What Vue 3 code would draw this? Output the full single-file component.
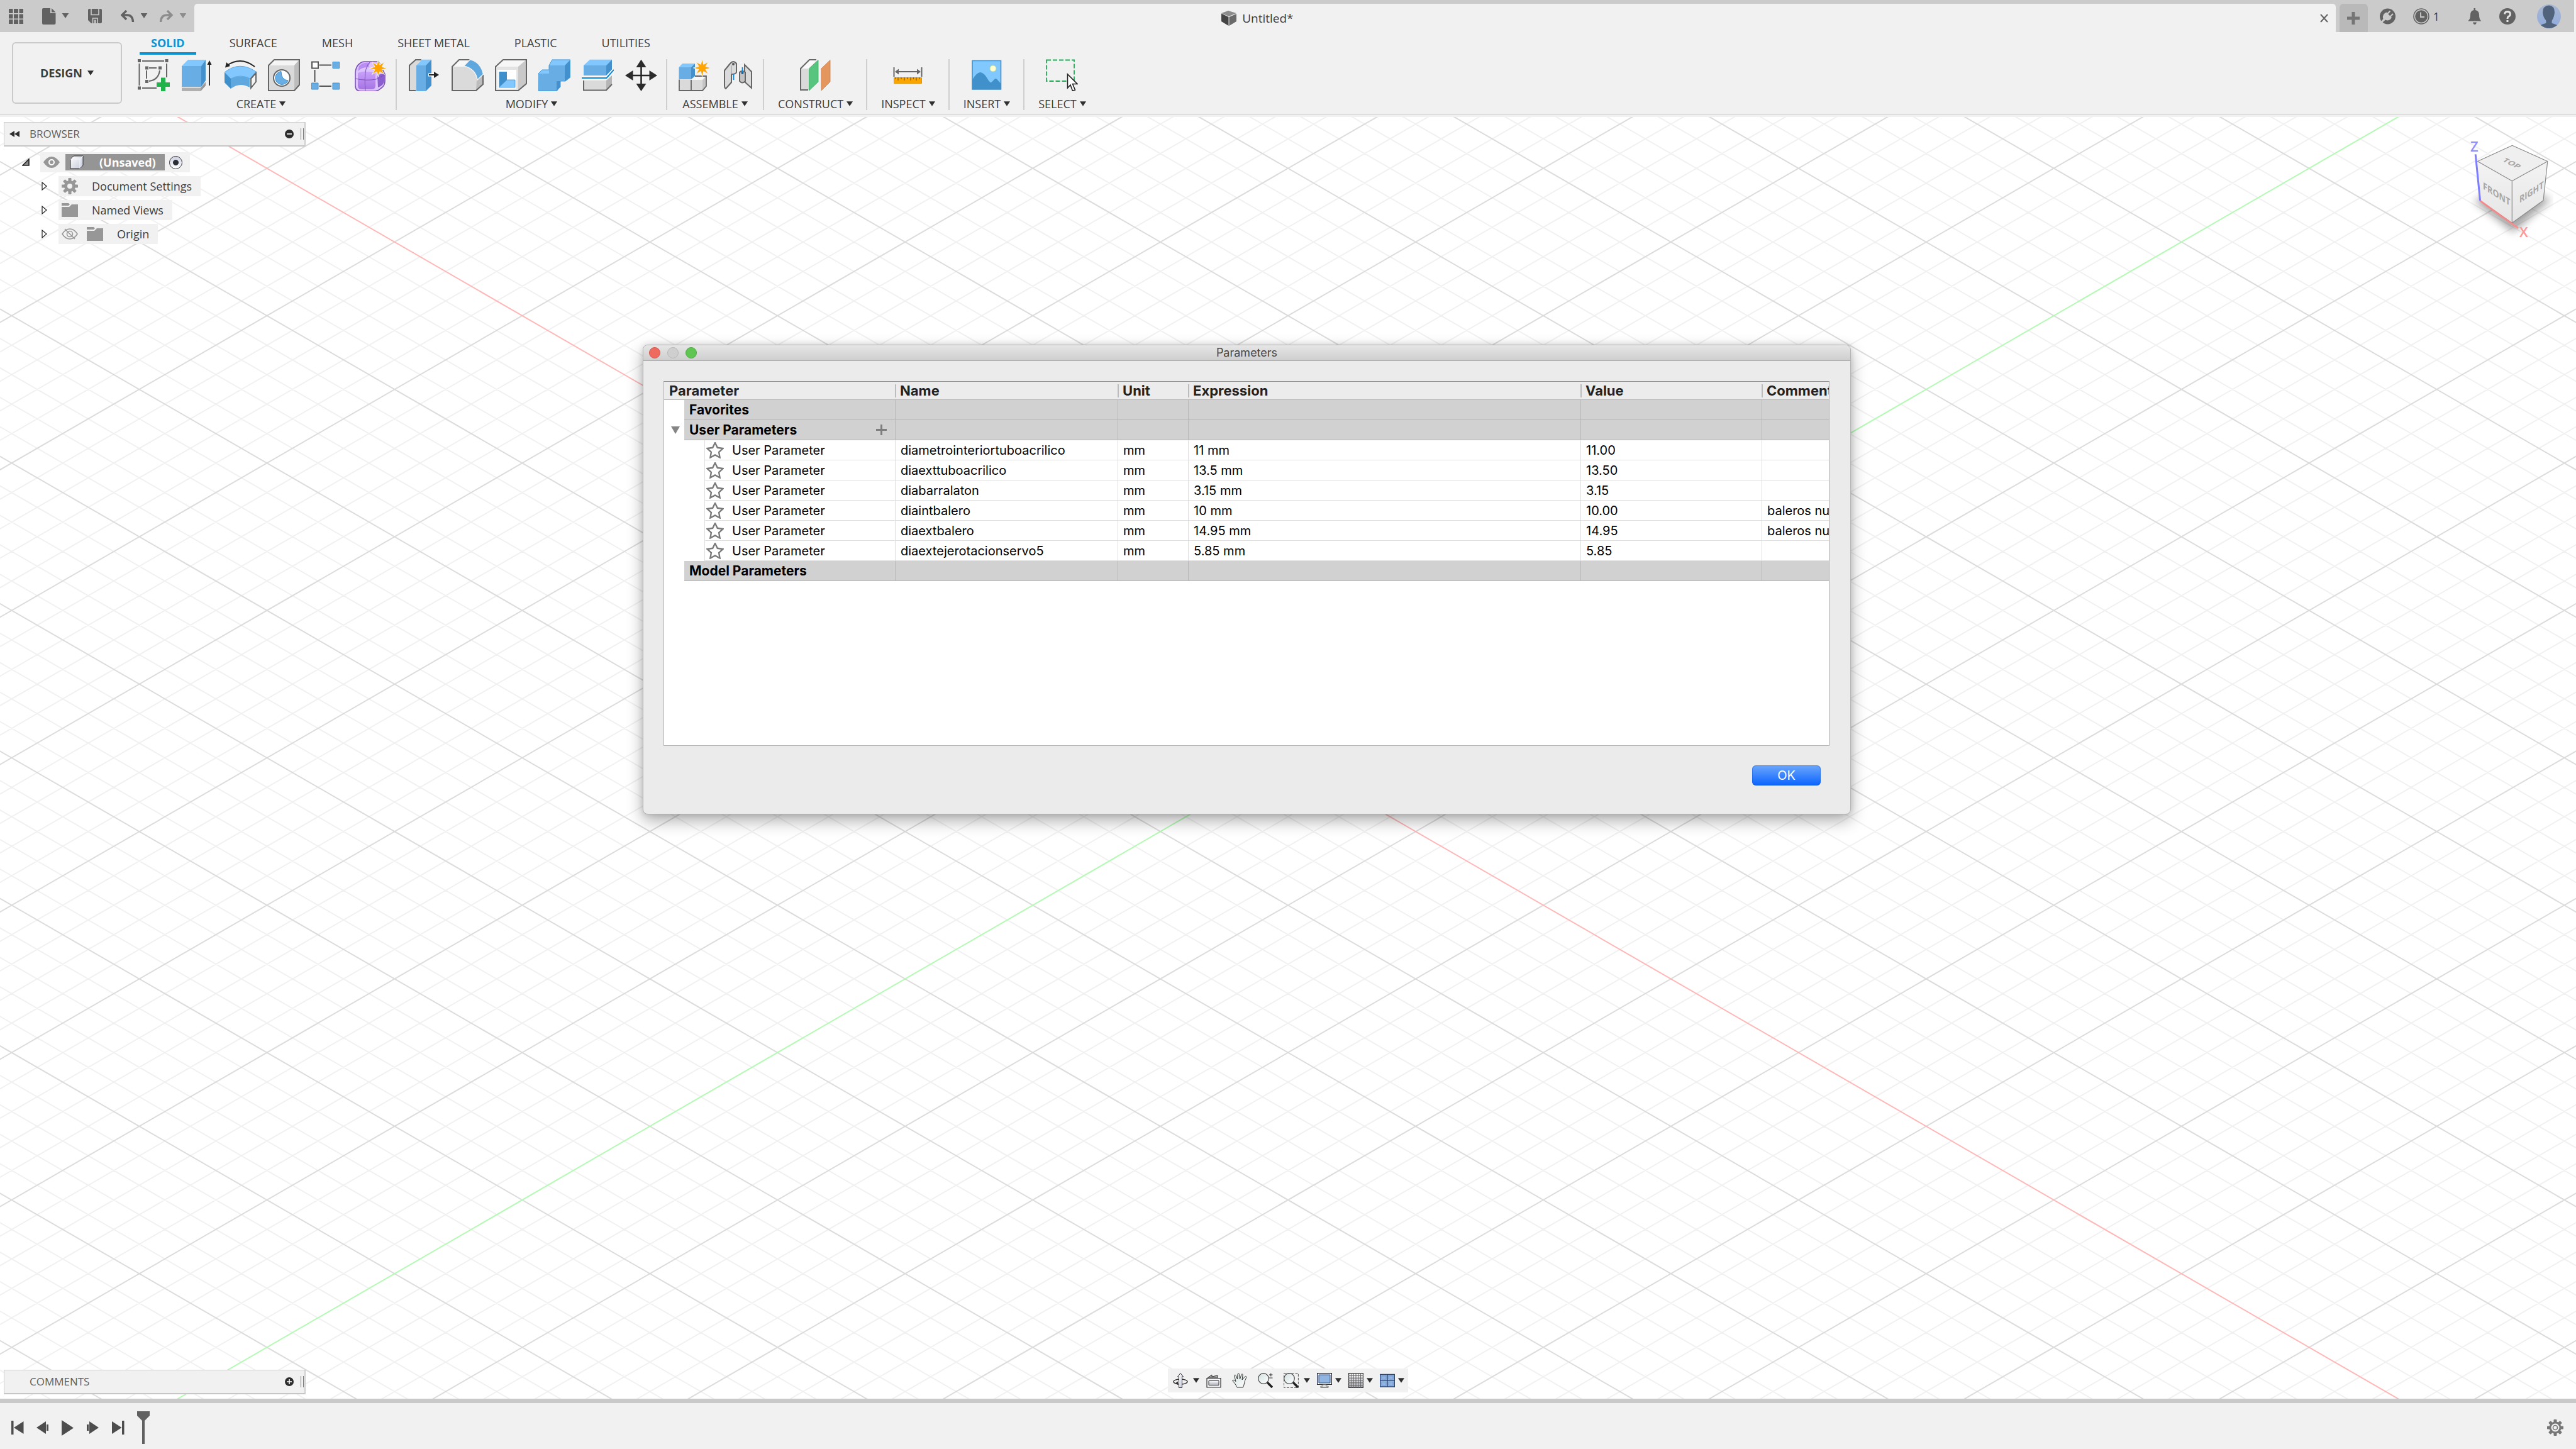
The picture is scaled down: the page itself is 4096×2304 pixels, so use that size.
<script setup>
import { ref } from 'vue'

const tabs = ['SOLID', 'SURFACE', 'MESH', 'SHEET METAL', 'PLASTIC', 'UTILITIES']
const activeTab = ref('SOLID')

const groups = [
  { label: 'CREATE', icons: ['sketch', 'extrude', 'revolve', 'hole', 'pattern', 'form'] },
  { label: 'MODIFY', icons: ['presspull', 'fillet', 'shell', 'combine', 'split', 'move'] },
  { label: 'ASSEMBLE', icons: ['component', 'joint'] },
  { label: 'CONSTRUCT', icons: ['plane'] },
  { label: 'INSPECT', icons: ['measure'] },
  { label: 'INSERT', icons: ['picture'] },
  { label: 'SELECT', icons: ['select'] },
]

const parameters = [
  { name: 'diametrointeriortuboacrilico', expression: '11 mm', value: '11.00', comment: '' },
  { name: 'diaexttuboacrilico', expression: '13.5 mm', value: '13.50', comment: '' },
  { name: 'diabarralaton', expression: '3.15 mm', value: '3.15', comment: '' },
  { name: 'diaintbalero', expression: '10 mm', value: '10.00', comment: 'baleros nu' },
  { name: 'diaextbalero', expression: '14.95 mm', value: '14.95', comment: 'baleros nu' },
  { name: 'diaextejerotacionservo5', expression: '5.85 mm', value: '5.85', comment: '' },
]

const navTools = [
  { icon: 'orbit', label: 'Orbit', menu: true },
  { icon: 'lookat', label: 'Look at' },
  { icon: 'pan', label: 'Pan' },
  { icon: 'zoom', label: 'Zoom' },
  { icon: 'fit', label: 'Fit', menu: true },
  { icon: 'display', label: 'Display settings', menu: true },
  { icon: 'gridsnap', label: 'Grid and snaps', menu: true },
  { icon: 'viewports', label: 'Viewports', menu: true },
]

const transport = ['first', 'prev', 'play', 'next', 'last']

// Isometric ground grid: parallel families of lines, every fifth one is major.
const slope = Math.tan(Math.PI / 6)
const step = 46.868
const reach = 2600
const family = (sign, major) => {
  let d = ''
  for (let k = -52; k <= 52; k++) {
    if (k === 0 || (k % 5 === 0) !== major) continue
    const c = k * step
    d += `M${-reach} ${(c - sign * slope * reach).toFixed(1)}L${reach} ${(c + sign * slope * reach).toFixed(1)}`
  }
  return d
}
const minorLines = family(1, false) + family(-1, false)
const majorLines = family(1, true) + family(-1, true)
const axisY = slope * reach

const star = (cx, cy, outer, inner, n) =>
  Array.from({ length: n * 2 }, (_, i) => {
    const r = i % 2 ? inner : outer
    const a = (Math.PI * i) / n - Math.PI / 2
    return `${(cx + r * Math.cos(a)).toFixed(1)},${(cy + r * Math.sin(a)).toFixed(1)}`
  }).join(' ')
const teeth = Array.from({ length: 8 }, (_, i) => i * 45)
</script>

<template>
  <div class="app">
    <svg class="sprite" aria-hidden="true">
      <defs>
        <linearGradient id="purple" x1="0" y1="0" x2="0" y2="1">
          <stop offset="0" stop-color="#c9a2fb" /><stop offset="1" stop-color="#a674e4" />
        </linearGradient>
        <linearGradient id="glass" x1="0" y1="0" x2="1" y2="1">
          <stop offset="0" stop-color="#d3e0e0" /><stop offset="1" stop-color="#ffffff" />
        </linearGradient>
        <linearGradient id="steel" x1="0" y1="0" x2="0" y2="1">
          <stop offset="0" stop-color="#ffffff" /><stop offset="1" stop-color="#a9abb8" />
        </linearGradient>
        <linearGradient id="body" x1="0" y1="0" x2="1" y2="1">
          <stop offset="0" stop-color="#ffffff" /><stop offset="1" stop-color="#c3c7da" />
        </linearGradient>
        <linearGradient id="avatar" x1="0" y1="0" x2="0" y2="1">
          <stop offset="0" stop-color="#a9b8d3" /><stop offset="1" stop-color="#8fabdc" />
        </linearGradient>
      </defs>

      <symbol id="i-sketch" viewBox="0 0 51 51">
        <path d="M7 3H42M2.500 7V42M46 7V29M7 46H30M18 14H30M14 18V31M35 18Q33 33 18 35" fill="none" stroke="#666" stroke-width="2" />
        <path d="M0 0h5v5h-5zM43.500 0h5v5h-5zM0 43.500h5v5h-5zM12 11.500h5v5h-5zM33 11.500h5v5h-5zM12 33h5v5h-5z" fill="#666" />
        <path d="M37 29.500h7v7.500h7v7h-7v7.500h-7v-7.500h-7v-7h7z" fill="#22b24c" />
      </symbol>
      <symbol id="i-extrude" viewBox="0 0 51 51">
        <path d="M1 11H32V44H1z" fill="#68aee4" />
        <path d="M1 11L11 1H39L32 11z" fill="#82c7fd" />
        <path d="M39 1V34L32 44V11z" fill="#4390cd" />
        <path d="M1 45.500H31L39 36V42L31 51H1z" fill="#b0b0b0" />
        <path d="M31 46L39 37V42L31 51z" fill="#999" />
        <path d="M45 8V42" stroke="#222" stroke-width="1.800" />
        <path d="M45 2L48.500 9H41.500z" fill="#222" />
      </symbol>
      <symbol id="i-revolve" viewBox="0 0 51 51">
        <path d="M48 12Q26 -5 4 10" fill="none" stroke="#222" stroke-width="2" />
        <path d="M1 13.500L3 5L9 11z" fill="#222" />
        <path d="M0 21V37L10 47Q24 36 40 45V30Q24 24 10 31z" fill="#5fa7df" />
        <path d="M0 21V37L10 47V31z" fill="#3f8fca" />
        <path d="M0 21Q24 2 50 20L41 31Q25 23 10 31z" fill="#82c7fd" stroke="#5ba9e6" />
        <path d="M50 22L42 31V46L50 36z" fill="#f4f4f4" stroke="#666" stroke-width="2" />
      </symbol>
      <symbol id="i-hole" viewBox="0 0 51 51">
        <path d="M1 10L10 1H50V41L42 50H1z" fill="#dadada" />
        <path d="M1 10L10 1H50L42 10z" fill="#f5f5f5" />
        <path d="M50 1V41L42 50V10z" fill="#bdbdbd" />
        <path d="M1 10L10 1H50V41L42 50H1z" fill="none" stroke="#666" stroke-width="2" />
        <circle cx="22" cy="30" r="13" fill="#fff" stroke="#666" stroke-width="2" />
        <path d="M21 19.500A10.500 10.500 0 1 0 32 34Q21 33 21 19.500z" fill="#68aee4" stroke="#3f8fca" />
      </symbol>
      <symbol id="i-pattern" viewBox="0 0 51 51">
        <path d="M12.500 9.500H32M5.500 17V36M12.500 43H32" stroke="#555" stroke-width="2" />
        <path d="M1 4.500h10v10h-10z" fill="#fff" stroke="#555" stroke-width="2" />
        <path d="M34 4.500h10.500v10h-10.500zM.5 38h10.500v10h-10.500zM34 38h10.500v10h-10.500z" fill="#68aee4" stroke="#4390cd" />
      </symbol>
      <symbol id="i-form" viewBox="0 0 51 51">
        <path d="M1 21Q2 11 8 7Q11 4 16 4H38L48 24V35Q48 43 41 47Q37 51 30 51H10Q1 51 1 42z" fill="#dcc3ff" stroke="#7c50b8" stroke-width="1.600" />
        <path d="M5 22Q15 17 33 22V42Q33 48 27 48H11Q5 48 5 42z" fill="url(#purple)" />
        <path d="M36 25L47 23V35Q46 42 37 45z" fill="#8b5fd0" />
        <path d="M7 11Q12 5 24 6L22 13Q12 12 5 19z" fill="#b78df2" />
        <path d="M1 31Q18 35 34 32L47 25M17 50Q15 28 18 16Q20 8 25 4" fill="none" stroke="#7c50b8" />
        <polygon :points="star(37.5, 14.5, 14, 6, 8)" fill="#ffa400" stroke="#f1f1f1" stroke-width="1" />
      </symbol>
      <symbol id="i-presspull" viewBox="0 0 51 51">
        <path d="M2 10L12 1H21L13 10V51H2z" fill="#dadada" />
        <path d="M12 50H2V10L12 1H21" fill="none" stroke="#666" stroke-width="2" />
        <path d="M13 10H28V51H13z" fill="#68aee4" />
        <path d="M13 10L22 .7H37L28 10z" fill="#82c7fd" />
        <path d="M37 .7V42L28 51V10z" fill="#4390cd" />
        <path d="M32 25H43" stroke="#fff" stroke-width="5" />
        <path d="M33 25H43" stroke="#222" stroke-width="2" />
        <path d="M41 20L49 25L41 30z" fill="#222" />
      </symbol>
      <symbol id="i-fillet" viewBox="0 0 51 51">
        <path d="M1 12L12 1H29Q50 10 50.500 25V40L39 50H1z" fill="#dadada" />
        <path d="M1 12L12 1H29L20 12z" fill="#f7f7f7" />
        <path d="M40 33L50 25V40L39 50z" fill="#bdbdbd" />
        <path d="M29 1H12L1 12V50H39L50 40V25" fill="none" stroke="#666" stroke-width="2" />
        <path d="M29.500 .5Q47 5 50.500 24L41 33Q38 15 19.500 11z" fill="#5fa7df" stroke="#f1f1f1" stroke-width="1.500" />
      </symbol>
      <symbol id="i-shell" viewBox="0 0 51 51">
        <path d="M1 12L13 1H50V39L37 50H1z" fill="#e3e3e3" />
        <path d="M1 12L13 1H50L37 12z" fill="#f7f7f7" />
        <path d="M50 1V39L37 50V12z" fill="#c9c9c9" />
        <path d="M1 12L13 1H50V39L37 50H1z" fill="none" stroke="#666" stroke-width="2" />
        <path d="M4 17H34V47H4z" fill="#fff" />
        <path d="M6.500 20H19V33L6.500 45z" fill="#3f8fca" />
        <path d="M19 33H32V45H6.500z" fill="#82c7fd" stroke="#4390cd" stroke-width=".8" />
      </symbol>
      <symbol id="i-combine" viewBox="0 0 51 51">
        <path d="M0 23H17V10H42V35H35L30 51H0z" fill="#68aee4" />
        <path d="M0 23L6 17H17V23zM17 10L22 .7H51L42 10z" fill="#82c7fd" />
        <path d="M51 .7V29L43 35H42V10zM35 35V44L29 51V35z" fill="#4390cd" />
        <path d="M0 23L6 17H17V10L22 1H50.500V29L43 35H35V44L29 50.500H.5z" fill="none" stroke="#4b9ad8" />
      </symbol>
      <symbol id="i-split" viewBox="0 0 51 51">
        <path d="M3 34H39L48 26V41L39 50H3z" fill="#dadada" />
        <path d="M39 34L48 26V41L39 50z" fill="#b5b5b5" />
        <path d="M3 34V49.500H39L48 40" fill="none" stroke="#666" stroke-width="2" />
        <path d="M3 10H39V26H3z" fill="#68aee4" />
        <path d="M3 10L13 .7H48L39 10z" fill="#82c7fd" />
        <path d="M48 .7V17L39 26V10z" fill="#4390cd" />
        <path d="M0 30H39.500L51 17" fill="none" stroke="#fff" stroke-width="5" />
        <path d="M0 30H39.500L51 17" fill="none" stroke="#0f86d6" stroke-width="2" />
      </symbol>
      <symbol id="i-move" viewBox="0 0 51 51">
        <path d="M25.500 10V42M9 26H42" stroke="#222" stroke-width="2.500" />
        <path d="M25.500 .7L33.500 13H17.500zM25.500 51L33.500 39H17.500zM0 26L12.500 18V34zM51 26L38.500 18V34z" fill="#2b2b2b" />
      </symbol>
      <symbol id="i-component" viewBox="0 0 51 51">
        <path d="M1 32.500H20L26 27H44V43L38 50H1z" fill="#dadada" />
        <path d="M20 33L26 27H44L38 33z" fill="#f7f7f7" />
        <path d="M38 33L44 27V43L38 50z" fill="#c5c5c5" />
        <path d="M1 32.500V50H38L44 43V27H26M20 33V50" fill="none" stroke="#666" stroke-width="1.800" />
        <path d="M.5 13H20V32H.5z" fill="#68aee4" />
        <path d="M.5 13L6 7H26L20 13z" fill="#82c7fd" />
        <path d="M26 7V27L20 32V13z" fill="#4390cd" />
        <polygon :points="star(37.5, 14, 14, 6, 8)" fill="#ffa400" stroke="#f1f1f1" stroke-width="1" />
      </symbol>
      <symbol id="i-joint" viewBox="0 0 51 51">
        <path d="M4 18L13 7Q18 1 23 7V21Q22 24 15 24V37L6 47Q4 46 4 43z" fill="#dadada" stroke="#666" stroke-width="2" />
        <path d="M15 24V10" stroke="#999" fill="none" />
        <circle cx="18" cy="8" r="2" fill="#555" />
        <path d="M18.500 24V33" stroke="#0f86d6" stroke-width="1.800" />
        <path d="M36 9L47 20V46L36 36z" fill="#dadada" stroke="#666" stroke-width="2" />
        <path d="M28 21Q32 17 37 21V35Q32 40 28 35z" fill="#c4c4c4" stroke="#666" stroke-width="2" />
        <circle cx="32.500" cy="22" r="2" fill="#1d5f95" />
        <path d="M32.500 13V21" stroke="#0f86d6" stroke-width="1.800" />
      </symbol>
      <symbol id="i-plane" viewBox="0 0 51 51">
        <path d="M2 15L16 1H28L15 15V49H2z" fill="#dadada" />
        <path d="M2 15L16 1H28L15 15z" fill="#f9f9f9" />
        <path d="M14 49H2V15L16 1H27" fill="none" stroke="#666" stroke-width="2" />
        <path d="M15.500 15L30 1.500V36L15.500 50z" fill="#57c57d" stroke="#3da965" stroke-width=".8" />
        <path d="M35 15L49 1.500V36L35 50z" fill="#e5965f" stroke="#c97c46" stroke-width=".8" />
      </symbol>
      <symbol id="i-measure" viewBox="0 0 51 51">
        <path d="M3.500 13V28M47.500 13V28M7 20H44" stroke="#666" stroke-width="2" />
        <path d="M5 20L11 15.500V24.500zM46 20L40 15.500V24.500z" fill="#666" />
        <path d="M3.500 29.500H47.500V38.500H3.500z" fill="#fba600" stroke="#e69500" />
        <path d="M6 29V32M10 29V34M15 29V32M20 29V34M25 29V32M30 29V34M34.500 29V32M39 29V34M44 29V32" stroke="#8a5b00" stroke-width="1.300" />
      </symbol>
      <symbol id="i-picture" viewBox="0 0 51 51">
        <path d="M3 2.500H48.500V48H3z" fill="#80c8fd" />
        <circle cx="36" cy="15" r="5" fill="#ffffcf" stroke="#b8dca0" />
        <path d="M3 33Q10 21 16 21Q22 22 27 31Q31 38 33 37Q36 35 38 32Q41 29 44 34L48.500 39V48H3z" fill="#4090cb" />
        <path d="M3 2.500H48.500V48H3z" fill="none" stroke="#4090cb" stroke-width="1.600" />
      </symbol>
      <symbol id="i-select" viewBox="0 0 51 51">
        <path d="M1 1.500H45V35H1z" fill="none" stroke="#22a955" stroke-width="1.800" stroke-dasharray="7 3" />
        <path d="M34.500 24V46L39 41L42.500 50.500L46.500 49L42.500 39.500H50z" fill="#fff" stroke="#222" stroke-width="1.600" />
      </symbol>

      <symbol id="i-orbit" viewBox="0 0 24 24">
        <ellipse cx="12" cy="14" rx="11" ry="4" fill="none" stroke="#333" stroke-width="1.400" />
        <path d="M12 .5L16.500 6H14.500V23.500H9.500V6H7.500z" fill="url(#body)" stroke="#333" />
        <path d="M3.500 16.500L8 13.500V19z" fill="#333" />
      </symbol>
      <symbol id="i-lookat" viewBox="0 0 24 24">
        <path d="M2 8L9 3V6L18 4V8z" fill="#aaa" stroke="#333" />
        <path d="M1 8.500H23V23H1z" fill="#f7f7fa" stroke="#333" stroke-width="1.200" />
        <path d="M4 12.500H20V19.500H4z" fill="url(#steel)" stroke="#333" />
      </symbol>
      <symbol id="i-pan" viewBox="0 0 24 24">
        <path d="M8 23C6 18 2 14 .8 12.500C1 10.500 3 11 6 13.500L3.500 4.500C4 2.500 6 3 6.500 5L8.500 10L9 2C9.500 .3 11.500 .5 11.500 2.500L12.500 10L15 2.500C16 1 17.500 2 17 4L16 11L20.500 6C22 4.500 23.500 6 22.500 8C19 14 20 18 17.500 23z" fill="url(#glass)" stroke="#333" />
      </symbol>
      <symbol id="i-zoom" viewBox="0 0 24 24">
        <path d="M15 15L23 23" stroke="#222" stroke-width="3.600" />
        <circle cx="9" cy="9" r="8.300" fill="url(#glass)" stroke="#444" stroke-width="1.200" />
        <path d="M18 3H23.500M20.800 .5V5.500M18 8H23.500" stroke="#333" stroke-width="1.100" />
      </symbol>
      <symbol id="i-fit" viewBox="0 0 24 24">
        <path d="M.6 .6H23.400V23.400H.6z" fill="none" stroke="#555" stroke-width="1" stroke-dasharray="4 2" />
        <path d="M15 15L23 23" stroke="#222" stroke-width="3.600" />
        <circle cx="9" cy="9" r="8.300" fill="url(#glass)" stroke="#444" stroke-width="1.200" />
      </symbol>
      <symbol id="i-display" viewBox="0 0 24 24">
        <path d="M.6 .6H23.400V18.500H.6z" fill="#fff" stroke="#222d44" stroke-width="1.200" />
        <path d="M3 3H21V16H3z" fill="#92b4e0" stroke="#2f4c7b" />
        <path d="M9.500 18.500V21H6V23.500H18V21H14.500V18.500z" fill="#ddd" stroke="#555" stroke-width=".8" />
      </symbol>
      <symbol id="i-gridsnap" viewBox="0 0 24 24">
        <path d="M.6 .6H23.400V23.400H.6z" fill="url(#steel)" stroke="#333" stroke-width="1.200" />
        <path d="M4.400 0V24M8.200 0V24M12 0V24M15.800 0V24M19.600 0V24M0 4.400H24M0 8.200H24M0 12H24M0 15.800H24M0 19.600H24" stroke="#666" stroke-width="1" />
      </symbol>
      <symbol id="i-viewports" viewBox="0 0 24 24">
        <path d="M.6 2.500H23.400V22H.6z" fill="#92b4e0" stroke="#2a4676" stroke-width="1.300" />
        <path d="M3 5H10V10H3zM14 5H21V10H14zM3 14.500H10V19.500H3zM14 14.500H21V19.500H14z" fill="none" stroke="#7196cc" stroke-width=".8" />
        <path d="M12 2.500V22M.6 12.200H23.400" stroke="#2a4676" stroke-width="1.300" />
      </symbol>

      <symbol id="i-first" viewBox="0 0 20 26">
        <path d="M0 2H3.500V24H0zM19.500 3V23L4 13z" fill="#4d4d4d" />
      </symbol>
      <symbol id="i-prev" viewBox="0 0 20 26">
        <path d="M15 3V23L0 13zM16 8H19V18H16z" fill="#4d4d4d" />
      </symbol>
      <symbol id="i-play" viewBox="0 0 20 26">
        <path d="M0 1V26L19 13.500z" fill="#4d4d4d" />
      </symbol>
      <symbol id="i-next" viewBox="0 0 20 26">
        <path d="M4 3V23L19 13zM0 8H3V18H0z" fill="#4d4d4d" />
      </symbol>
      <symbol id="i-last" viewBox="0 0 20 26">
        <path d="M16 2H19.500V24H16zM0 3V23L15.500 13z" fill="#4d4d4d" />
      </symbol>
      <symbol id="i-folder" viewBox="0 0 26 22">
        <path d="M0 0H11L13 2L11 4H0zM0 6H12L16 2H26V22H0z" fill="#979797" />
      </symbol>
      <symbol id="i-caret" viewBox="0 0 12 9">
        <path d="M0 0H12L6 9z" fill="currentColor" />
      </symbol>
      <symbol id="i-gear" viewBox="0 0 26 26">
        <rect v-for="a in teeth" :key="a" x="10.500" y="0" width="5" height="7" rx="1" fill="currentColor" :transform="`rotate(${a} 13 13)`" />
        <circle cx="13" cy="13" r="6.500" fill="none" stroke="currentColor" stroke-width="5" />
      </symbol>
    </svg>

    <header class="titlebar">
      <nav class="quick" aria-label="Quick access">
        <button aria-label="Data panel">
          <svg width="23" height="24" viewBox="0 0 23 24"><path d="M0 0h6.500v7h-6.500zM8 0h7v7h-7zM16.500 0h6.500v7h-6.500zM0 8.500h6.500v7h-6.500zM8 8.500h7v7h-7zM16.500 8.500h6.500v7h-6.500zM0 17h6.500v7h-6.500zM8 17h7v7h-7zM16.500 17h6.500v7h-6.500z" fill="#626262" /></svg>
        </button>
        <button class="with-caret" aria-label="File">
          <svg width="22" height="26" viewBox="0 0 22 26"><path d="M2 0H13V8H21.500V24Q21.500 26 19.500 26H2Q0 26 0 24V2Q0 0 2 0zM15 0L21.500 6.500H15z" fill="#626262" /></svg>
          <svg class="caret wide"><use href="#i-caret" /></svg>
        </button>
        <button aria-label="Save">
          <svg width="22" height="23" viewBox="0 0 22 23"><path d="M2 0H20Q22 0 22 2V21Q22 23 20 23H5L0 18V2Q0 0 2 0z" fill="#626262" /><path d="M5 0V9.500H17V0M7.500 23V15H15V23" fill="none" stroke="#cbcbcb" stroke-width="1.600" /><path d="M10 17.500H12.500V23H10z" fill="#cbcbcb" /></svg>
        </button>
        <span class="history">
          <button class="with-caret" aria-label="Undo">
            <svg width="22" height="20" viewBox="0 0 22 20"><path d="M9 1L2 8L9 15M2 8H10Q19 8 19.500 19" fill="none" stroke="#626262" stroke-width="3.400" /></svg>
            <svg class="caret wide"><use href="#i-caret" /></svg>
          </button>
          <button class="with-caret faded" aria-label="Redo">
            <svg width="22" height="20" viewBox="0 0 22 20"><path d="M12 1L19 8L12 15M19 8H11Q2 8 1.500 19" fill="none" stroke="#8d8d8d" stroke-width="3.400" /></svg>
            <svg class="caret wide"><use href="#i-caret" /></svg>
          </button>
        </span>
      </nav>
      <div class="doc-tab">
        <h1 class="doc-title">
          <svg width="26" height="26" viewBox="0 0 26 26"><path d="M1 5L12 1L25 5L13 10z" fill="#8c8c8c" /><path d="M1 5.500L12.500 11V25L1 18z" fill="#444" /><path d="M13.500 11L25 6V18L13.500 25z" fill="#6a6a6a" /></svg>
          Untitled*
        </h1>
        <button aria-label="Close document">
          <svg width="13" height="14" viewBox="0 0 13 14"><path d="M1 1L12 13M12 1L1 13" stroke="#626262" stroke-width="2" /></svg>
        </button>
      </div>
      <button class="new-tab" aria-label="New document">
        <svg width="20" height="20" viewBox="0 0 20 20"><path d="M10 0V20M0 10H20" stroke="#757575" stroke-width="5" /></svg>
      </button>
      <div class="account">
        <button aria-label="Extensions">
          <svg width="25" height="26" viewBox="0 0 25 26"><circle cx="12.500" cy="13" r="12.500" fill="#626262" /><path d="M5 13Q5 10 8 8L10.500 6.500L19 15L16.500 18Q13 20.500 9 18.500L4 23L2 21L5.500 17Q4.500 15 5 13z" fill="#cbcbcb" /><path d="M12 9L16.500 4.500M16.500 13.500L21 9" stroke="#cbcbcb" stroke-width="2.200" /></svg>
        </button>
        <button class="jobs" aria-label="Job status, 1 pending">
          <svg width="26" height="26" viewBox="0 0 26 26"><circle cx="13" cy="13" r="12" fill="none" stroke="#626262" stroke-width="1.600" /><circle cx="13" cy="13" r="9.800" fill="#626262" /><path d="M12 6.500V14H18" fill="none" stroke="#cbcbcb" stroke-width="1.800" /></svg>
          1
        </button>
        <button class="bell" aria-label="Notifications">
          <svg width="22" height="26" viewBox="0 0 22 26"><path d="M9.500 0H12V3Q18 4 18 11Q18 18 21.500 20.500H0Q4 18 4 11Q4 4 9.500 3zM8 22.500H14Q13 26 11 26Q9 26 8 22.500z" fill="#626262" /></svg>
        </button>
        <button aria-label="Help">
          <svg width="26" height="26" viewBox="0 0 26 26"><circle cx="13" cy="13" r="13" fill="#626262" /><path d="M8.500 9.500Q9 5.500 13 5.500Q17.500 5.500 17.500 9.500Q17.500 12 15 13Q13 14 13 17" fill="none" stroke="#e6e6e6" stroke-width="2.800" /><path d="M11.500 19H14.500V22H11.500z" fill="#e6e6e6" /></svg>
        </button>
        <button class="profile" aria-label="Account">
          <svg width="38" height="38" viewBox="0 0 38 38"><circle cx="19" cy="19" r="19" fill="url(#avatar)" /><path d="M9 13Q9 2 19 1.500Q28 2 28 13Q27 21 24 25Q23 29 24 30Q28 31 31 32.500Q32 33 32 33Q26 38 19 38Q12 38 6 33Q9 31 14 30Q15 29 14 25Q10 21 9 13z" fill="#50627c" /></svg>
        </button>
      </div>
    </header>

    <section class="ribbon" aria-label="Ribbon">
      <button class="workspace">DESIGN <svg class="caret"><use href="#i-caret" /></svg></button>
      <div class="ribbon-main">
        <div class="tabs">
          <button v-for="t in tabs" :key="t" class="tab" :class="{ active: t === activeTab }" @click="activeTab = t">{{ t }}</button>
        </div>
        <div class="groups">
          <div v-for="g in groups" :key="g.label" class="group">
            <div class="tools">
              <button v-for="i in g.icons" :key="i" :aria-label="i"><svg class="tool"><use :href="'#i-' + i" /></svg></button>
            </div>
            <button class="group-label">{{ g.label }}<svg class="caret"><use href="#i-caret" /></svg></button>
          </div>
        </div>
      </div>
    </section>

    <main class="viewport">
      <svg class="ground" viewBox="-2048 -1019 4096 2038" preserveAspectRatio="xMidYMid slice" aria-hidden="true">
        <g fill="none">
          <path :d="minorLines" stroke="#f1f1f1" stroke-width="2" />
          <path :d="majorLines" stroke="#dcdcdc" stroke-width="2" />
          <path :d="`M${-reach} ${-axisY}L${reach} ${axisY}`" stroke="#ffb8b8" stroke-width="2" />
          <path :d="`M${-reach} ${axisY}L${reach} ${-axisY}`" stroke="#b4fab4" stroke-width="2" />
        </g>
      </svg>

      <aside class="browser">
        <div class="panel">
          <svg width="16" height="10" viewBox="0 0 16 10"><path d="M8 0V10L0 5zM16 0V10L8 5z" fill="#2d2d2d" /></svg>
          <h2>BROWSER</h2>
          <button aria-label="Collapse browser"><svg width="14" height="14" viewBox="0 0 14 14"><circle cx="7" cy="7" r="7" fill="#2d2d2d" /><path d="M3 7H11" stroke="#fff" stroke-width="1.600" /></svg></button>
          <span class="grip"></span>
        </div>
        <ul class="tree">
          <li>
            <svg class="root-arrow" width="12" height="12" viewBox="0 0 12 12"><path d="M1 11L11 1V11z" fill="#888" stroke="#222" stroke-width="1.600" /></svg>
            <div class="chip root">
              <svg width="26" height="18" viewBox="0 0 26 18"><path d="M0 9Q6 0 13 0Q20 0 26 9Q20 18 13 18Q6 18 0 9z" fill="#979797" /><circle cx="13" cy="9" r="4" fill="none" stroke="#fff" stroke-width="2" /></svg>
              <span class="selected">
                <svg width="22" height="22" viewBox="0 0 22 22"><path d="M1 6L6 1H21V16L16 21H1z" fill="url(#body)" stroke="#333" /><path d="M1 6H16V21M16 6L21 1" fill="none" stroke="#f8f8f8" /></svg>
                (Unsaved)
              </span>
              <input type="radio" name="active-component" aria-label="Activate component" checked />
            </div>
          </li>
          <li class="child">
            <svg class="arrow"><path d="M1 1V13L8 7z" fill="#fff" stroke="#222" stroke-width="1.200" /></svg>
            <div class="chip"><svg class="gear"><use href="#i-gear" /></svg><span>Document Settings</span></div>
          </li>
          <li class="child">
            <svg class="arrow"><path d="M1 1V13L8 7z" fill="#fff" stroke="#222" stroke-width="1.200" /></svg>
            <div class="chip"><svg class="folder"><use href="#i-folder" /></svg><span>Named Views</span></div>
          </li>
          <li class="child">
            <svg class="arrow"><path d="M1 1V13L8 7z" fill="#fff" stroke="#222" stroke-width="1.200" /></svg>
            <div class="chip">
              <svg class="hidden-eye" width="26" height="18" viewBox="0 0 26 18"><path d="M1 9Q6 1 13 1Q20 1 25 9Q20 17 13 17Q6 17 1 9zM5 1L21 17" fill="none" stroke="#979797" stroke-width="1.600" /><circle cx="13" cy="9" r="4.500" fill="none" stroke="#979797" stroke-width="1.600" /></svg>
              <svg class="folder"><use href="#i-folder" /></svg><span>Origin</span>
            </div>
          </li>
        </ul>
      </aside>

      <svg class="view-cube" viewBox="0 0 140 170" role="img" aria-label="View cube">
        <defs>
          <filter id="soft" x="-50%" y="-50%" width="200%" height="200%"><feGaussianBlur stdDeviation="7" /></filter>
          <linearGradient id="face" x1="0" y1="0" x2="0" y2="1"><stop offset="0" stop-color="#f3f3f3" /><stop offset="1" stop-color="#e6e6e6" /></linearGradient>
        </defs>
        <path d="M14 104L74 80L136 102L76 154z" fill="#000" opacity=".36" filter="url(#soft)" />
        <path d="M19.500 41.500L74.300 72.700V139.400L23.600 104.200z" fill="url(#face)" />
        <path d="M130.800 41.500L74.300 72.700V139.400L124 103.700z" fill="url(#face)" />
        <path d="M74.600 16.200L19.500 41.500L74.300 72.700L130.800 41.500z" fill="#efefef" />
        <path d="M74.600 16.200L19.500 41.500L74.300 72.700L130.800 41.500zM74.300 72.700V139.400M23.600 104.200L74.300 139.400L124 103.700L130.800 41.500" fill="none" stroke="#8a8a8a" stroke-width="1.200" stroke-linejoin="round" />
        <path d="M16.200 30.300L23.600 104.200" stroke="#7d7dff" stroke-width="3" />
        <path d="M23.600 104.200L84 147.700" stroke="#f88" stroke-width="3" opacity=".85" />
        <text x="8" y="26" class="axis z">Z</text>
        <text x="86" y="162" class="axis x">X</text>
        <text class="face" transform="matrix(.85 .54 0 1 28 85)">FRONT</text>
        <text class="face" transform="matrix(.84 -.54 0 1 86 108)">RIGHT</text>
        <text class="face" transform="matrix(.85 .42 -.6 .5 58 41)">TOP</text>
      </svg>

      <section class="dialog" role="dialog" aria-labelledby="dialog-title">
        <header class="dialog-bar">
          <div class="lights">
            <button class="light red" aria-label="Close"></button>
            <button class="light" aria-label="Minimize"></button>
            <button class="light green" aria-label="Zoom window"></button>
          </div>
          <h2 id="dialog-title">Parameters</h2>
        </header>
        <div class="dialog-body">
          <div class="table-frame">
            <table>
              <colgroup>
                <col class="c-gutter" /><col class="c-indent" /><col class="c-param" /><col class="c-name" /><col class="c-unit" /><col /><col class="c-value" /><col class="c-comment" />
              </colgroup>
              <thead>
                <tr>
                  <th colspan="3">Parameter</th><th>Name</th><th>Unit</th><th>Expression</th><th>Value</th><th>Comment</th>
                </tr>
              </thead>
              <tbody>
                <tr class="section">
                  <td class="blank"></td><th colspan="2" scope="row">Favorites</th><td></td><td></td><td></td><td></td><td></td>
                </tr>
                <tr class="section">
                  <td class="blank"><button class="twisty" aria-label="Collapse user parameters"><svg width="14" height="12" viewBox="0 0 14 12"><path d="M0 0H14L7 12z" fill="#858585" /></svg></button></td>
                  <th colspan="2" scope="row">
                    <div class="with-add">User Parameters
                      <button aria-label="Add user parameter"><svg width="17" height="17" viewBox="0 0 17 17"><path d="M8.500 0V17M0 8.500H17" stroke="#7d7d7d" stroke-width="3" /></svg></button>
                    </div>
                  </th>
                  <td></td><td></td><td></td><td></td><td></td>
                </tr>
                <tr v-for="p in parameters" :key="p.name" class="item">
                  <td class="blank"></td><td class="blank"></td>
                  <td class="kind">
                    <div>
                      <button aria-label="Add to favorites"><svg width="28" height="26" viewBox="0 0 28 26"><polygon :points="star(14, 14, 13, 6.4, 5)" fill="#fff" stroke="#7a7a7a" stroke-width="2.400" /></svg></button>
                      User Parameter
                    </div>
                  </td>
                  <td>{{ p.name }}</td><td>mm</td><td>{{ p.expression }}</td><td>{{ p.value }}</td><td>{{ p.comment }}</td>
                </tr>
                <tr class="section last">
                  <td class="blank"></td><th colspan="2" scope="row">Model Parameters</th><td></td><td></td><td></td><td></td><td></td>
                </tr>
              </tbody>
            </table>
          </div>
          <button class="ok">OK</button>
        </div>
      </section>

      <div class="panel comments">
        <h2>COMMENTS</h2>
        <button aria-label="Expand comments"><svg width="14" height="14" viewBox="0 0 14 14"><circle cx="7" cy="7" r="7" fill="#2d2d2d" /><path d="M3 7H11M7 3V11" stroke="#fff" stroke-width="1.600" /></svg></button>
        <span class="grip"></span>
      </div>

      <div class="navbar" role="toolbar" aria-label="Navigation">
        <button v-for="n in navTools" :key="n.icon" :class="n.icon" :aria-label="n.label">
          <svg class="nav-icon"><use :href="'#i-' + n.icon" /></svg>
          <svg v-if="n.menu" class="caret"><use href="#i-caret" /></svg>
        </button>
      </div>
    </main>

    <footer class="timeline">
      <div class="transport">
        <button v-for="t in transport" :key="t" :aria-label="t"><svg class="key"><use :href="'#i-' + t" /></svg></button>
        <svg width="20" height="52" viewBox="0 0 20 52"><path d="M0 0H20V7L12 15V52H8V15L0 7z" fill="#606060" /></svg>
      </div>
      <button class="settings" aria-label="Timeline settings">
        <svg width="26" height="26" viewBox="0 0 26 26"><rect v-for="a in teeth" :key="a" x="10.500" y="0" width="5" height="6" rx="1" fill="#777" :transform="`rotate(${a} 13 13)`" /><circle cx="13" cy="13" r="8" fill="none" stroke="#777" stroke-width="3" /><circle cx="13" cy="13" r="3.500" fill="none" stroke="#777" stroke-width="1.600" /></svg>
      </button>
    </footer>
  </div>
</template>

<style>
body {
  margin: 0;
}
</style>

<style scoped>
.app {
  display: flex;
  flex-direction: column;
  min-height: 100vh;
  background: #f1f1f1;
  color: #3c3c3c;
  font: 18px/20px "Open Sans", "Noto Sans", sans-serif;
}
.sprite {
  position: absolute;
  width: 0;
  height: 0;
}
svg {
  display: block;
  flex: none;
}
button {
  border: 0;
  padding: 0;
  background: none;
  color: inherit;
  font: inherit;
}
h1, h2, ul {
  margin: 0;
  padding: 0;
  font: inherit;
  list-style: none;
}
.caret {
  width: 10px;
  height: 8px;
  color: #2f2f2f;
}
.caret.wide {
  width: 12px;
  height: 8px;
  color: #626262;
  margin-bottom: 2px;
}
.faded .caret {
  color: #8d8d8d;
}

/* Title bar */
.titlebar {
  display: flex;
  align-items: stretch;
  height: 51px;
  background: #cbcbcb;
  border-right: 3px solid #f1f1f1;
}
.quick {
  display: flex;
  align-items: center;
  gap: 30px;
  padding: 0 12px 0 14px;
}
.with-caret {
  display: flex;
  align-items: center;
  gap: 9px;
}
.history {
  display: flex;
  gap: 19px;
}
.doc-tab {
  flex: 1;
  display: flex;
  align-items: center;
  margin-top: 6px;
  padding-right: 12px;
  background: #f1f1f1;
  border-radius: 5px 5px 0 0;
}
.doc-title {
  flex: 1;
  display: flex;
  align-items: center;
  justify-content: center;
  gap: 8px;
  font-size: 19px;
}
.new-tab {
  display: flex;
  align-items: center;
  justify-content: center;
  width: 45px;
  margin: 6px 0 0 6px;
  background: #b9b9b9;
  border-radius: 6px 6px 0 0;
}
.account {
  display: flex;
  align-items: center;
  gap: 28px;
  padding: 0 21px 0 19px;
}
.jobs {
  display: flex;
  align-items: center;
  gap: 6px;
}
.bell {
  margin-left: 17px;
}
.profile {
  margin-left: 6px;
}

/* Ribbon */
.ribbon {
  display: flex;
  padding: 0 19px 6px;
  border-bottom: 1px solid #c6c6c6;
  margin-bottom: 4px;
}
.workspace {
  display: flex;
  align-items: center;
  justify-content: center;
  box-sizing: border-box;
  gap: 8px;
  width: 175px;
  height: 98px;
  margin: 16px 7px 0 0;
  border: 2px solid #cacaca;
  border-radius: 6px;
  font-weight: 700;
}
.tabs {
  display: flex;
  gap: 35px;
  padding-left: 21px;
}
.tab {
  padding: 2px 18px 0;
  line-height: 30px;
  border-bottom: 4px solid transparent;
}
.tab.active {
  color: #0b93d2;
  border-color: #0b93d2;
  font-weight: 700;
}
.groups {
  display: flex;
  margin-top: 7px;
}
.group {
  display: flex;
  flex-direction: column;
  align-items: center;
  border-right: 2px solid #cfcfcf;
}
.group:nth-child(n + 4) {
  padding: 0 21px 0 22px;
}
.group:last-child {
  border: 0;
}
.tools {
  display: flex;
  gap: 18px;
  padding: 0 14px 0 18px;
}
.group:nth-child(n + 4) .tools {
  padding: 0;
}
.tool {
  width: 51px;
  height: 51px;
}
.group-label {
  display: flex;
  align-items: center;
  gap: 5px;
  margin-top: 10px;
}

/* Viewport */
.viewport {
  position: relative;
  flex: 1;
  overflow: hidden;
  background: #fff;
}
.ground {
  position: absolute;
  inset: 0;
  width: 100%;
  height: 100%;
}
.browser {
  position: absolute;
  top: 8px;
  left: 6px;
}
.panel {
  display: flex;
  align-items: center;
  box-sizing: border-box;
  width: 480px;
  height: 39px;
  padding: 0 1px 0 8px;
  background: #f1f1f1;
  border: 1px solid #cfcfcf;
  border-right-width: 2px;
  border-bottom: 2px solid #c6c6c6;
  color: #5f5f5f;
}
.panel h2 {
  flex: 1;
  margin-left: 16px;
  font-size: 17px;
}
.grip {
  box-sizing: border-box;
  width: 5px;
  height: 18px;
  margin-left: 11px;
  border: solid #7a7a7a;
  border-width: 0 1px;
}
.comments {
  position: absolute;
  left: 6px;
  bottom: 7px;
}
.comments h2 {
  margin-left: 32px;
}
.tree {
  display: flex;
  flex-direction: column;
  gap: 6px;
  margin-top: 9px;
  padding-left: 29px;
}
.tree li {
  display: flex;
  align-items: center;
  height: 32px;
}
.tree .child {
  padding-left: 31px;
}
.root-arrow {
  margin-right: 17px;
}
.arrow {
  width: 9px;
  height: 14px;
  margin-right: 18px;
}
.chip {
  display: flex;
  align-items: center;
  height: 32px;
  padding: 0 14px 0 5px;
  background: #f1f1f1;
}
.chip span {
  margin-left: 22px;
}
.chip.root {
  padding-right: 12px;
}
.chip .selected {
  display: flex;
  align-items: center;
  gap: 25px;
  height: 26px;
  margin: 0 7px 0 9px;
  padding: 0 14px 0 7px;
  background: #959595;
  color: #fff;
  font-weight: 700;
}
.gear {
  width: 26px;
  height: 26px;
  color: #979797;
}
.folder {
  width: 26px;
  height: 22px;
}
.hidden-eye {
  margin-right: 14px;
}
.chip input {
  appearance: none;
  width: 21px;
  height: 21px;
  margin: 0;
  border: 1px solid #333;
  border-radius: 50%;
  background: radial-gradient(circle, #2c2f36 0 4px, transparent 5px), linear-gradient(#cdd1e3, #fff);
}

.view-cube {
  position: absolute;
  top: 29px;
  right: 36px;
  width: 140px;
  height: 170px;
}
.axis {
  font-size: 22px;
  font-weight: 600;
}
.axis.z {
  fill: #8f8fff;
}
.axis.x {
  fill: #ff9696;
}
.face {
  font-size: 15px;
  font-weight: 700;
  fill: #a6a6a6;
}

/* Parameters dialog */
.dialog {
  position: absolute;
  top: 362px;
  left: 1022px;
  right: 1153px;
  border: 1px solid #b4b4b4;
  border-radius: 8px;
  box-sizing: border-box;
  background: #ebebeb;
  box-shadow: 0 10px 26px rgba(0, 0, 0, 0.32), 0 0 10px rgba(0, 0, 0, 0.12);
  color: #000;
  font: 20px/24px Inter, "Liberation Sans", sans-serif;
}
.dialog-bar {
  display: grid;
  grid-template-columns: 1fr auto 1fr;
  align-items: center;
  height: 24px;
  padding: 0 9px;
  border-bottom: 1px solid #a9a9a9;
  border-radius: 8px 8px 0 0;
  background: linear-gradient(#e6e6e6, #cecece);
  color: #474747;
}
.dialog-bar h2 {
  font-size: 18px;
}
.lights {
  display: flex;
  gap: 11px;
}
.light {
  box-sizing: border-box;
  width: 18px;
  height: 18px;
  border: 1px solid #b9b9b9;
  border-radius: 50%;
  background: #cfcfcf;
}
.light.red {
  background: #ee6a5e;
  border-color: #d8564b;
}
.light.green {
  background: #61c554;
  border-color: #4faa42;
}
.dialog-body {
  display: flex;
  flex-direction: column;
  padding: 32px 33px 45px 32px;
}
.table-frame {
  height: 578px;
  overflow: hidden;
  background: #fff;
  border: 1px solid #b0b0b0;
  border-top-color: #8c8c8c;
}
table {
  width: 100%;
  table-layout: fixed;
  border-collapse: separate;
  border-spacing: 0;
}
.c-gutter {
  width: 32px;
}
.c-indent {
  width: 32px;
}
.c-param {
  width: 303px;
}
.c-name {
  width: 354px;
}
.c-unit {
  width: 112px;
}
.c-value {
  width: 288px;
}
.c-comment {
  width: 107px;
}
th, td {
  box-sizing: border-box;
  height: 32px;
  padding: 0 0 0 8px;
  overflow: hidden;
  text-align: left;
  text-overflow: clip;
  white-space: nowrap;
}
thead th {
  height: 29px;
  background: linear-gradient(#bcbcbc, #bcbcbc) left center / 2px 21px no-repeat #ececec;
  border-bottom: 1px solid #b4b4b4;
  color: #222;
  font-size: 22px;
}
thead th:first-child {
  background: #ececec;
}
.section th {
  font-size: 21px;
}
.section th, .section td {
  background: #d1d1d1;
  border-bottom: 1px solid #b5b5b5;
}
.section td {
  border-left: 1px solid #b8b8b8;
}
.section td.blank, .item td.blank {
  padding: 0;
  background: #fff;
  border: 0;
}
.item td {
  border-left: 1px solid #dedede;
  border-bottom: 1px solid #dedede;
}
.twisty {
  display: block;
  margin-left: 11px;
}
.with-add {
  display: flex;
  align-items: center;
  justify-content: space-between;
  padding-right: 13px;
}
.item .kind {
  padding-left: 2px;
}
.kind div {
  display: flex;
  align-items: center;
  gap: 13px;
}
.ok {
  align-self: flex-end;
  width: 109px;
  height: 32px;
  margin: 31px 14px 0 0;
  border-radius: 6px;
  background: linear-gradient(#6ba6fb, #0a63ff);
  box-shadow: inset 0 0 1px 1px rgba(20, 90, 220, 0.5);
  color: #fff;
}

/* Navigation bar */
.navbar {
  position: absolute;
  left: 50%;
  bottom: 10px;
  transform: translateX(-50%);
  display: flex;
  align-items: center;
  gap: 17px;
  height: 38px;
  padding: 0 6px 0 8px;
  background: #f1f1f1;
}
.navbar button {
  display: flex;
  align-items: center;
  gap: 5px;
}
.navbar .orbit, .navbar .fit {
  gap: 8px;
}
.navbar .orbit, .navbar .fit, .navbar .display, .navbar .gridsnap {
  margin-right: -6px;
}
.nav-icon {
  width: 24px;
  height: 24px;
}

/* Timeline */
.timeline {
  display: flex;
  align-items: center;
  justify-content: space-between;
  box-sizing: border-box;
  height: 80px;
  padding: 12px 20px 8px 18px;
  border-top: 7px solid #c9c9c9;
}
.transport {
  display: flex;
  align-items: center;
  gap: 20px;
}
.key {
  width: 20px;
  height: 26px;
}
</style>
